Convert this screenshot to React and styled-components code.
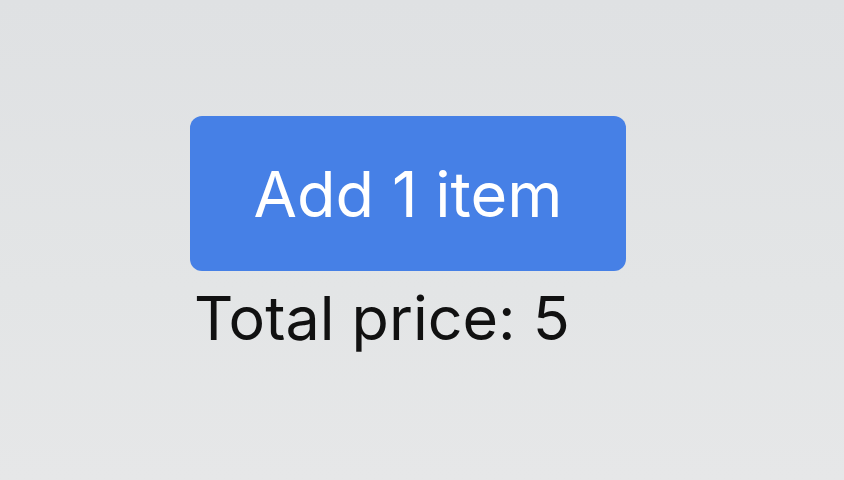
import styled, { createGlobalStyle } from "styled-components";

const GlobalStyle = createGlobalStyle`
  html, body {
    margin: 0;
    padding: 0;
  }
  body {
    min-height: 480px;
    background: linear-gradient(180deg, #dfe1e3 0%, #e3e5e6 60%, #e6e7e8 100%);
    font-family: Inter, "Noto Sans", sans-serif;
  }
`;

export default function App() {
  const price = 5;
  return (
    <>
      <GlobalStyle />
      <StyledPage>
        <StyledButton>Add 1 item</StyledButton>
        <StyledTotal>Total price: {price}</StyledTotal>
      </StyledPage>
    </>
  );
}

const StyledPage = styled.main`
  display: flex;
  flex-direction: column;
  align-items: flex-start;
  padding: 116px 0 0 190px;
`;

const StyledButton = styled.button`
  width: 436px;
  height: 155px;
  border: none;
  border-radius: 12px;
  background-color: #4680e6;
  color: #ffffff;
  font-family: Inter, "Noto Sans", sans-serif;
  font-size: 63px;
  padding: 0;
`;

const StyledTotal = styled.p`
  margin: 8px 0 0 4px;
  font-size: 61px;
  line-height: 78px;
  color: #111111;
`;
